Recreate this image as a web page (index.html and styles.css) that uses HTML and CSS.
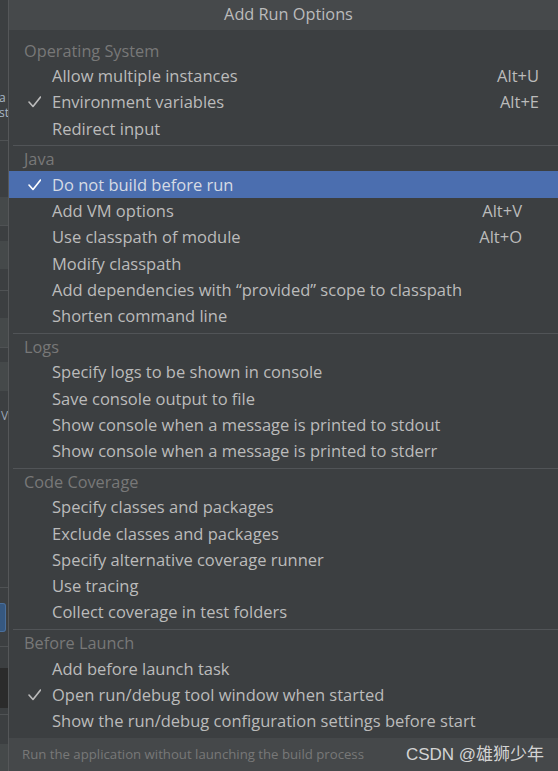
FILE: index.html
```html
<!DOCTYPE html>
<html>
<head>
<meta charset="utf-8">
<link rel="stylesheet" href="styles.css">
</head>
<body>
<div class="screen">
  <div class="strip">
    <div class="s-gap" style="height:90px"></div>
    <div class="s-txt s-two">a<br>st</div>
    <div class="s-gap" style="height:20px"></div>
    <div class="s-line"></div>
    <div class="s-gap" style="height:56px"></div>
    <div class="s-box" style="height:28px"></div>
    <div class="s-line"></div>
    <div class="s-gap" style="height:15px"></div>
    <div class="s-box" style="height:28px"></div>
    <div class="s-gap" style="height:21px"></div>
    <div class="s-line"></div>
    <div class="s-gap" style="height:27px"></div>
    <div class="s-box" style="height:29px"></div>
    <div class="s-line"></div>
    <div class="s-gap" style="height:14px"></div>
    <div class="s-box" style="height:29px"></div>
    <div class="s-gap" style="height:17px"></div>
    <div class="s-txt s-v">V</div>
    <div class="s-gap" style="height:164px"></div>
    <div class="s-line"></div>
    <div class="s-gap" style="height:15px"></div>
    <div class="s-btn"></div>
    <div class="s-gap" style="height:14px"></div>
    <div class="s-line"></div>
    <div class="s-gap" style="height:21px"></div>
    <div class="s-dark"></div>
    <div class="s-gap" style="height:6px"></div>
    <div class="s-line"></div>
    <div class="s-gap" style="height:29px"></div>
    <div class="s-box" style="height:30px"></div>
  </div>
  <div class="popup">
    <div class="title">Add Run Options</div>
    <div class="list">
      <div class="group g-wide">
        <div class="header">Operating System</div>
        <div class="item"><span class="chk"></span><span class="label">Allow multiple instances</span><span class="key">Alt+U</span></div>
        <div class="item"><span class="chk"><svg viewBox="0 0 13 12" width="13" height="12"><polyline points="1,6 5,10.5 12.5,1" /></svg></span><span class="label">Environment variables</span><span class="key">Alt+E</span></div>
        <div class="item"><span class="chk"></span><span class="label">Redirect input</span></div>
      </div>
      <div class="sep"></div>
      <div class="group g-narrow">
        <div class="header">Java</div>
        <div class="item selected"><span class="chk"><svg viewBox="0 0 13 12" width="13" height="12"><polyline points="1,6 5,10.5 12.5,1" /></svg></span><span class="label">Do not build before run</span></div>
        <div class="item"><span class="chk"></span><span class="label">Add VM options</span><span class="key">Alt+V</span></div>
        <div class="item"><span class="chk"></span><span class="label">Use classpath of module</span><span class="key">Alt+O</span></div>
        <div class="item"><span class="chk"></span><span class="label">Modify classpath</span></div>
        <div class="item"><span class="chk"></span><span class="label">Add dependencies with “provided” scope to classpath</span></div>
        <div class="item"><span class="chk"></span><span class="label">Shorten command line</span></div>
      </div>
      <div class="sep"></div>
      <div class="group">
        <div class="header">Logs</div>
        <div class="item"><span class="chk"></span><span class="label">Specify logs to be shown in console</span></div>
        <div class="item"><span class="chk"></span><span class="label">Save console output to file</span></div>
        <div class="item"><span class="chk"></span><span class="label">Show console when a message is printed to stdout</span></div>
        <div class="item"><span class="chk"></span><span class="label">Show console when a message is printed to stderr</span></div>
      </div>
      <div class="sep"></div>
      <div class="group">
        <div class="header">Code Coverage</div>
        <div class="item"><span class="chk"></span><span class="label">Specify classes and packages</span></div>
        <div class="item"><span class="chk"></span><span class="label">Exclude classes and packages</span></div>
        <div class="item"><span class="chk"></span><span class="label">Specify alternative coverage runner</span></div>
        <div class="item"><span class="chk"></span><span class="label">Use tracing</span></div>
        <div class="item"><span class="chk"></span><span class="label">Collect coverage in test folders</span></div>
      </div>
      <div class="sep"></div>
      <div class="group">
        <div class="header">Before Launch</div>
        <div class="item"><span class="chk"></span><span class="label">Add before launch task</span></div>
        <div class="item"><span class="chk"><svg viewBox="0 0 13 12" width="13" height="12"><polyline points="1,6 5,10.5 12.5,1" /></svg></span><span class="label">Open run/debug tool window when started</span></div>
        <div class="item"><span class="chk"></span><span class="label">Show the run/debug configuration settings before start</span></div>
      </div>
    </div>
    <div class="footer">
      <span class="hint">Run the application without launching the build process</span>
      <span class="mark">CSDN @雄狮少年</span>
    </div>
  </div>
</div>
</body>
</html>
```
FILE: styles.css
```css
html, body {
  margin: 0;
  padding: 0;
  background: #3c3f41;
  overflow: hidden;
}

body {
  font-family: "Open Sans", "Noto Sans", sans-serif;
  color: #bbbbbb;
}

.screen {
  display: flex;
  height: 771px;
}

.strip {
  width: 8px;
  flex: none;
  display: flex;
  flex-direction: column;
  background: #3c3f41;
  overflow: hidden;
}

.s-gap { flex: none; }

.s-txt {
  flex: none;
  height: 15px;
  font-size: 12px;
  line-height: 15px;
  color: #a9b7c6;
  white-space: nowrap;
  margin-left: -1px;
}

.s-two {
  height: 30px;
}

.s-v {
  margin-left: 1px;
  color: #9aa5b5;
}

.s-line {
  flex: none;
  height: 1px;
  background: #4f5254;
}

.s-box {
  flex: none;
  background: #45494a;
}

.s-btn {
  flex: none;
  height: 27px;
  width: 5px;
  background: #365880;
  border: 1px solid #4a6f9c;
  border-left: none;
  border-radius: 0 3px 3px 0;
}

.s-dark {
  flex: none;
  height: 40px;
  background: #2b2b2b;
}

.popup {
  flex: 1;
  display: flex;
  flex-direction: column;
  border-left: 1px solid #555759;
  background: #3c3f41;
  min-width: 0;
}

.title {
  flex: none;
  height: 30px;
  background: #46494b;
  font-size: 16.3px;
  line-height: 29px;
  text-align: center;
  color: #bbbbbb;
  padding-left: 10px;
}

.list {
  flex: none;
  padding-top: 8.5px;
  padding-bottom: 4.5px;
}

.header {
  height: 24px;
  line-height: 24px;
  padding-left: 15px;
  font-size: 16.3px;
  color: #787878;
}

.item {
  height: 26.25px;
  display: flex;
  align-items: center;
  padding-left: 19px;
  font-size: 16.5px;
  white-space: nowrap;
}

.g-wide .item { padding-right: 19px; }
.g-narrow .item { padding-right: 36px; }

.item.selected {
  background: #4b6eaf;
  color: #d6dbe4;
}

.chk {
  width: 24px;
  flex: none;
  display: flex;
  align-items: center;
}

.chk svg {
  display: block;
  margin-top: 1px;
}

.chk polyline {
  fill: none;
  stroke: #bbbbbb;
  stroke-width: 1.6;
  stroke-linecap: round;
  stroke-linejoin: round;
}

.selected .chk polyline { stroke: #ffffff; }

.label {
  flex: 1;
}

.key {
  flex: none;
  margin-left: 20px;
}

.sep {
  height: 1px;
  background: #515457;
  margin: 4px 0 1px 4px;
}

.footer {
  flex: 1;
  background: #45484a;
  display: flex;
  align-items: flex-start;
  padding-left: 13px;
  padding-top: 6px;
}

.hint {
  font-size: 13.2px;
  line-height: 20px;
  color: #787878;
  white-space: nowrap;
}

.mark {
  margin-left: 42px;
  font-family: "Liberation Sans", "Noto Sans CJK SC", sans-serif;
  font-size: 17px;
  line-height: 22px;
  color: #d4d4d4;
  white-space: nowrap;
}
```
